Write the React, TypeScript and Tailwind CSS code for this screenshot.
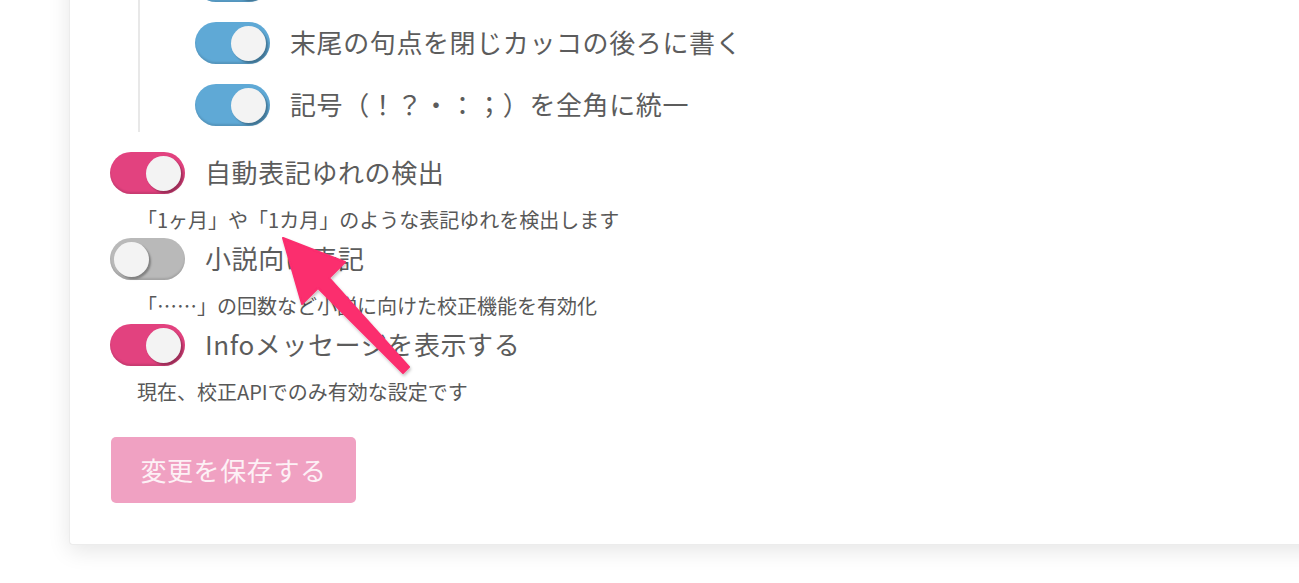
import React from 'react';

type Tone = 'blue' | 'pink' | 'gray';

const trackTone: Record<Tone, string> = {
  blue: 'bg-[#5fa9d6]',
  pink: 'bg-[#e2427f]',
  gray: 'bg-[#b9b9b9]',
};

function Toggle({ tone, on }: { tone: Tone; on: boolean }) {
  return (
    <div
      className={`relative flex items-center w-[75px] h-[42px] shrink-0 rounded-full px-[4px] shadow-[inset_0_-2px_2px_rgba(0,0,0,0.12)] ${trackTone[tone]} ${on ? 'justify-end' : 'justify-start'}`}
    >
      <span className="block w-[35px] h-[35px] rounded-full bg-[#f3f3f3] shadow-[2px_2px_2px_rgba(0,0,0,0.3)]" />
    </div>
  );
}

function Row({ tone, on, label, className = '' }: { tone: Tone; on: boolean; label?: string; className?: string }) {
  return (
    <div className={`flex items-center gap-[20px] ${className}`}>
      <Toggle tone={tone} on={on} />
      {label && (
        <span className="-mt-[3px] text-[26px] leading-[42px] tracking-[0.6px] text-[#5c5c5c] whitespace-nowrap">
          {label}
        </span>
      )}
    </div>
  );
}

function Hint({ children }: { children: React.ReactNode }) {
  return (
    <p className="mt-[14px] pl-[27px] text-[20px] leading-[24px] text-[#585858] whitespace-nowrap">{children}</p>
  );
}

export default function App() {
  return (
    <div className="relative h-[583px] w-[1299px] overflow-hidden bg-white font-['Noto_Sans_CJK_JP','Noto_Sans',sans-serif]">
      <div className="ml-[69px] mt-[-40px] w-[1300px] rounded-bl-[4px] bg-white pl-[40px] pb-[41px] border-b border-l border-[#ececec] shadow-[0_6px_22px_rgba(0,0,0,0.10)]">
        {/* nested options (first one scrolled above the view) */}
        <div className="ml-[28px] flex flex-col gap-[20px] border-l-2 border-[#e8e8e8] pl-[55px] pb-[6px]">
          <Row tone="blue" on />
          <Row tone="blue" on label="末尾の句点を閉じカッコの後ろに書く" />
          <Row tone="blue" on label="記号（！？・：；）を全角に統一" />
        </div>

        <Row tone="pink" on label="自動表記ゆれの検出" className="mt-[20px]" />
        <Hint>「1ヶ月」や「1カ月」のような表記ゆれを検出します</Hint>

        <Row tone="gray" on={false} label="小説向け表記" className="mt-[6px]" />
        <Hint>「……」の回数など小説に向けた校正機能を有効化</Hint>

        <Row tone="pink" on label="Infoメッセージを表示する" className="mt-[6px]" />
        <Hint>現在、校正APIでのみ有効な設定です</Hint>

        <button
          type="button"
          className="ml-[1px] mt-[33px] h-[66px] w-[245px] rounded-[5px] bg-[#f0a1c2] text-[26px] leading-[66px] tracking-[0.6px] text-[#fdf1f6]"
        >
          変更を保存する
        </button>
      </div>

      {/* annotation arrow */}
      <svg className="pointer-events-none absolute left-0 top-0" width="1299" height="583" viewBox="0 0 1299 583">
        <defs>
          <filter id="arrowShadow" x="-20%" y="-20%" width="140%" height="140%">
            <feDropShadow dx="1" dy="2" stdDeviation="1.5" floodColor="#000" floodOpacity="0.25" />
          </filter>
        </defs>
        <polygon
          points="283,238 345,262 329,278 409,367 403,373 318,288 302,304"
          fill="#fb2d6e"
          stroke="#fb2d6e"
          strokeWidth="2"
          strokeLinejoin="round"
          filter="url(#arrowShadow)"
        />
      </svg>
    </div>
  );
}
